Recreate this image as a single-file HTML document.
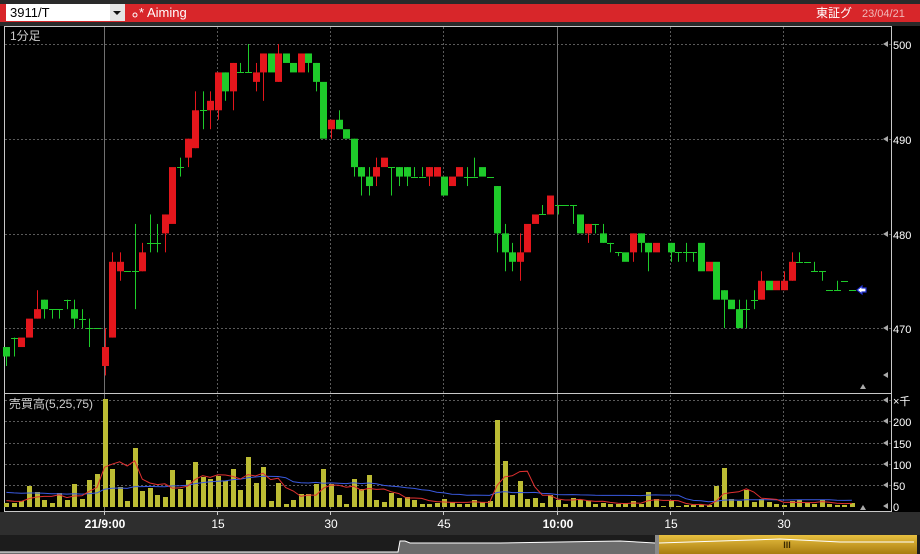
<!DOCTYPE html>
<html><head><meta charset="utf-8"><style>
html,body{margin:0;padding:0;background:#000;width:920px;height:554px;overflow:hidden}
svg{position:absolute;left:0;top:0}
text{font-family:"Liberation Sans","Noto Sans CJK JP",sans-serif}
</style></head><body>
<svg id="s" width="920" height="554" viewBox="0 0 920 554" xmlns="http://www.w3.org/2000/svg">
<rect x="0" y="0" width="920" height="554" fill="#000"/>
<rect x="0" y="0" width="920" height="26" fill="#2a2a2a"/>
<rect x="0" y="4" width="920" height="18" fill="#d8262a"/>
<rect x="6" y="4" width="104" height="17" fill="#fff"/>
<rect x="110" y="4" width="15" height="17" fill="#e4e4e4"/>
<polygon points="113,11 121,11 117,15" fill="#111"/>
<text x="10" y="17" font-size="13" fill="#000">3911/T</text>
<circle cx="135" cy="15" r="2" fill="none" stroke="#fff" stroke-width="1"/>
<text x="139" y="17" font-size="13" fill="#fff">* Aiming</text>
<text x="816" y="17" font-size="12" fill="#fff">東証グ</text>
<text x="862" y="17" font-size="11" fill="#f0b8b8">23/04/21</text>
<g id="grid"></g>
<rect x="4.5" y="26.5" width="887" height="485" fill="none" stroke="#c8c8c8"/>
<line x1="4" y1="393.5" x2="891" y2="393.5" stroke="#c8c8c8"/>
<text x="10" y="40" font-size="12" fill="#ccc">1分足</text>
<text x="9" y="408" font-size="12" fill="#ccc">売買高(5,25,75)</text>
<g id="vol"></g>
<g id="cnd"></g>
<rect x="0" y="512" width="920" height="23" fill="#2e2e2e"/>
<rect x="0" y="535" width="920" height="19" fill="#1c1c1c"/>
<polygon points="0,552 398,552 400,541 405,541 410,543 500,543 560,542 620,541 655,543 655,554 0,554" fill="#6c6c6c"/>
<polyline points="0,552 398,552 400,541 405,541 410,543 500,543 560,542 620,541 655,543" fill="none" stroke="#fff" stroke-width="1"/>
<defs><linearGradient id="g" x1="0" y1="0" x2="0" y2="1"><stop offset="0" stop-color="#e8c040"/><stop offset="1" stop-color="#a87c10"/></linearGradient></defs>
<rect x="655" y="535" width="262" height="19" fill="url(#g)"/>
<rect x="655" y="535" width="4" height="19" fill="#8a8a8a"/>
<polyline points="659,543 720,541 780,539 840,542 900,542 914,542" fill="none" stroke="#fff" stroke-width="1"/>
<text x="787" y="548" font-size="9" fill="#3a2a00" text-anchor="middle" font-weight="bold">III</text>
<g id="axis"></g>
</svg>
<script>
var NS="http://www.w3.org/2000/svg";
function el(p,t,a,txt){var e=document.createElementNS(NS,t);for(var k in a)e.setAttribute(k,a[k]);if(txt!==undefined)e.textContent=txt;document.getElementById(p).appendChild(e);return e;}
function X(i){return 104.5+i*7.55;}
function Y(p){return 44+(500-p)*9.47;}
// grid
[44,139,234,328].forEach(function(y){el("grid","line",{x1:5,y1:y+.5,x2:891,y2:y+.5,stroke:"#5a5a5a","stroke-dasharray":"2,2"});});
[400,421,443,464,485].forEach(function(y){el("grid","line",{x1:5,y1:y+.5,x2:891,y2:y+.5,stroke:"#5a5a5a","stroke-dasharray":"2,2"});});
[104,217,330,443,557,670,783].forEach(function(x){var solid=(x==104||x==557);el("grid","line",{x1:x+.5,y1:27,x2:x+.5,y2:511,stroke:solid?"#707070":"#5a5a5a","stroke-dasharray":solid?"none":"2,2"});});
// right labels
[[44,"500"],[139,"490"],[234,"480"],[328,"470"]].forEach(function(a){el("axis","text",{x:893,y:a[0]+5,"font-size":11,fill:"#fff"},a[1]);el("axis","polygon",{points:"883,"+a[0]+" 888,"+(a[0]-3)+" 888,"+(a[0]+3),fill:"#aaa"});});
el("axis","polygon",{points:"883,375 888,372 888,378",fill:"#aaa"});
[[400,"×千"],[421,"200"],[443,"150"],[464,"100"],[485,"50"],[506,"0"]].forEach(function(a){el("axis","text",{x:893,y:a[0]+5,"font-size":11,fill:"#fff"},a[1]);el("axis","polygon",{points:"883,"+a[0]+" 888,"+(a[0]-3)+" 888,"+(a[0]+3),fill:"#aaa"});});
el("axis","polygon",{points:"860,389 863,384 866,389",fill:"#aaa"});
el("axis","polygon",{points:"860,510 863,505 866,510",fill:"#aaa"});
[[104,"21/9:00",1],[217,"15",0],[330,"30",0],[443,"45",0],[557,"10:00",1],[670,"15",0],[783,"30",0]].forEach(function(a){el("axis","line",{x1:a[0]+.5,y1:512,x2:a[0]+.5,y2:515,stroke:"#ccc"});el("axis","text",{x:a[0]+1,y:528,"font-size":12,fill:"#fff","text-anchor":"middle","font-weight":a[2]?"bold":"normal"},a[1]);});
// candles
var C={};
var d=[[-13,468,467,468,466],[-12,469,469,469,467],[-11,468,469,469,468],[-10,469,471,471,469],[-9,471,472,474,471],[-8,473,472,473,471],[-7,472,472,472,471],[-6,472,472,472,471],[-5,473,473,473,472],[-4,472,471,473,470],[-3,471,471,472,470],[-2,470,470,471,468],[-1,470,470,470,470],
[0,466,468,470,465],[1,469,477,478,469],[2,476,477,478,475],[3,476,476,476,476],[4,476,476,481,472],[5,476,478,479,476],[6,479,479,482,478],[7,479,479,481,478],[8,480,482,482,478],[9,481,487,487,481],[10,487,487,488,486],[11,488,490,490,487],[12,489,493,495,489],[13,493,493,495,491],[14,493,494,495,491],[15,493,497,497,492],[16,497,495,497,494],[17,495,498,498,493],[18,497,497,498,497],[19,497,497,500,497],[20,496,497,498,495],[21,497,499,499,494],[22,499,497,499,497],[23,496,499,500,496],[24,499,498,499,498],[25,498,497,498,497],[26,497,499,499,497],[27,499,498,499,497],[28,498,496,498,495],[29,496,490,496,490],[30,491,492,492,490],[31,492,491,493,491],
[32,491,490,491,490],[33,490,487,490,486],[34,487,486,487,484],[35,486,485,487,484],[36,486,487,488,485],[37,487,488,488,487],[38,487,487,487,484],[39,487,486,487,485],[40,487,486,487,485],[41,486,486,487,486],[42,486,486,487,486],[43,486,487,487,485],[44,486,487,487,486],[45,486,484,486,484],[46,485,486,486,485],[47,486,487,487,486],[48,486,486,487,485],[49,486,486,488,486],[50,487,486,487,486],[51,486,486,486,486],
[52,485,480,485,478],[53,480,478,481,476],[54,478,477,479,476],[55,477,478,480,475],[56,478,481,481,478],[57,481,482,482,481],[58,482,482,483,482],[59,482,484,484,482],[60,483,483,483,482],[61,483,483,483,483],[62,483,483,483,481],[63,482,480,482,480],[64,480,481,481,479],[65,481,481,481,480],[66,480,479,481,479],[67,479,479,479,478],[68,478,478,478,477.6],[69,478,477,478,477],[70,478,480,480,477],[71,480,479,480,478],[72,479,478,479,476],[73,478,479,479,478],
[75,479,478,479,477],[76,478,478,478,477],[77,478,478,479,477],[78,478,478,478,477],[79,479,476,479,476],[80,476,477,477,476],[81,477,473,477,473],[82,474,473,474,470],[83,473,472,473,472],[84,472,470,473,470],[85,472,472,473,470],[86,473,473,474,472],[87,473,475,476,473],[88,475,474,475,474],[89,474,475,475,474],[90,474,475,476,474],[91,475,477,478,475],[92,477,477,478,477],[93,477,477,477,477],[94,476,476,477,476],[95,476,476,476,475],[96,474,474,474,474],[97,474,474,475,474],[98,475,475,475,475],[99,474,474,474,474]];
d.forEach(function(c){var i=c[0],o=c[1],cl=c[2],h=c[3],l=c[4];var x=Math.round(X(i));var col=cl>o?"#e4161c":"#1ecb2a";
if(h>Math.max(o,cl)||l<Math.min(o,cl))el("cnd","rect",{x:x,y:Y(h),width:1,height:Math.max(1,Y(l)-Y(h)),fill:col});
if(o==cl){el("cnd","rect",{x:x-3,y:Math.round(Y(o)),width:7,height:1,fill:col});}
else{var t=Y(Math.max(o,cl)),b=Y(Math.min(o,cl));el("cnd","rect",{x:x-3,y:t,width:7,height:b-t,fill:col});}
});
// arrow
el("cnd","polygon",{points:"857,290 862,286 862,288 866,288 866,292 862,292 862,294",fill:"#fff",stroke:"#2030d0","stroke-width":1.2});
// volume
var v1=[4,4,6,21,15,7,4,14,7,23,8,27,33,108,38,20,6,59,16,19,12,10,37,18,27,45,30,28,31,26,38,17,50,24,40,6,24];
var v2=[3,7,13,13,23,38,23,12,3,28,18,32,7,5,14,9,10,7,3,3,4,8,5,3,3,7,5,6,87,46,12,26,8,9,4,12,7,3,9,7,6,3,4,3,3,4,6];
var v3=[3,15,8,1,6,1,2,2,2,2,21,39,8,6,17,5,8,5,3,2,6,7,4,3,7,3,2,2,4];
var V=v1.concat(v2).concat(v3);
var base=507;
V.forEach(function(h,k){var i=k-13;var x=Math.round(X(i));el("vol","rect",{x:x-2,y:base-h,width:5,height:h,fill:"#bcbc34"});});
function ma(n,seed){var pts=[];for(var k=0;k<V.length;k++){var s=0;for(var j=k-n+1;j<=k;j++){s+=(j<0?seed:V[j]);}pts.push(X(k-13).toFixed(1)+","+(base-s/n).toFixed(1));}return pts.join(" ");}
el("vol","polyline",{points:ma(25,15),fill:"none",stroke:"#3a5ae0","stroke-width":1});
el("vol","polyline",{points:ma(5,7),fill:"none",stroke:"#e03030","stroke-width":1});
</script>
</body></html>
